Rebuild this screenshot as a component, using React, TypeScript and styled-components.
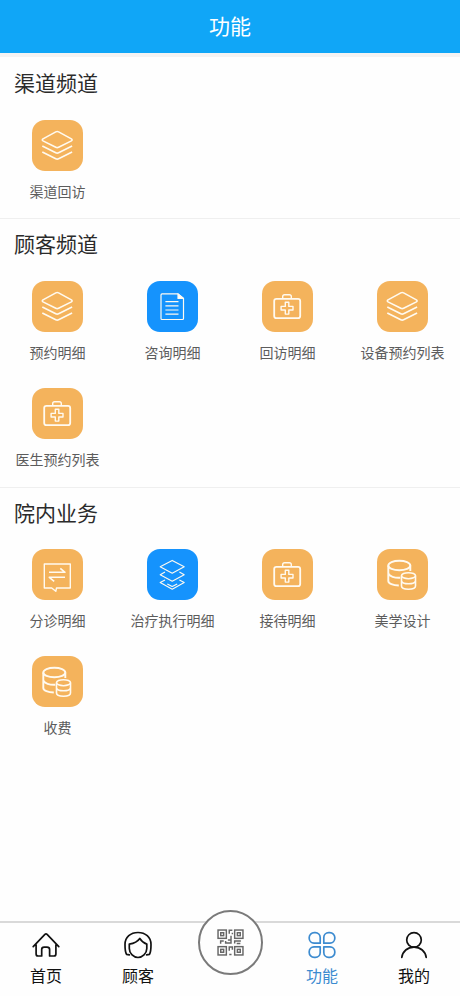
import React from "react";
import styled, { createGlobalStyle } from "styled-components";

const GlobalStyle = createGlobalStyle`
  * { box-sizing: border-box; }
  body {
    margin: 0;
    background: #fff;
    font-family: "Noto Sans CJK SC", sans-serif;
  }
`;

const Page = styled.div`
  display: flex;
  flex-direction: column;
  height: 996px;
  overflow: hidden;
  background: #fefefe;
`;

const Header = styled.header`
  flex: none;
  display: flex;
  align-items: center;
  justify-content: center;
  height: 53px;
  background: #10a6f7;
  color: #fff;
  font-size: 21px;
  line-height: 30px;
  padding-bottom: 3px;
`;

const Content = styled.main`
  flex: 1;
  border-top: 4px solid #f4f3f3;
`;

const Section = styled.section`
  padding-bottom: 15px;
  border-bottom: 1px solid #efefef;
  &:last-child { border-bottom: 0; }
`;

const SectionTitle = styled.h2`
  margin: 0;
  height: 62.8px;
  padding: 10px 14px 0;
  font-size: 21px;
  font-weight: 400;
  line-height: 30px;
  color: #2b2b2b;

  section + section > & {
    height: 61.5px;
    padding-top: 9px;
  }
`;

const Grid = styled.div`
  display: grid;
  grid-template-columns: repeat(4, 115px);
  row-gap: 23.8px;
`;

const Item = styled.div`
  display: flex;
  flex-direction: column;
  align-items: center;
  height: 83.5px;
`;

const Tile = styled.div<{ $blue?: boolean }>`
  width: 51px;
  height: 51px;
  border-radius: 13px;
  background: ${(p) => (p.$blue ? "#1593fd" : "#f4b35c")};
  svg { display: block; }
`;

const Label = styled.span`
  margin-top: 10px;
  font-size: 14px;
  line-height: 20px;
  color: #5c5c5c;
  white-space: nowrap;
`;

const TabBar = styled.nav`
  flex: none;
  display: grid;
  grid-template-columns: repeat(5, 1fr);
  height: 75px;
  border-top: 2px solid #d9d9d9;
`;

const Tab = styled.div<{ $active?: boolean }>`
  display: flex;
  flex-direction: column;
  align-items: center;
  padding-top: 7px;
  color: ${(p) => (p.$active ? "#3c8bd0" : "#111")};
  font-size: 16px;
  line-height: 24px;
  svg { display: block; margin-bottom: 3px; }
`;

const ScanButton = styled.div`
  justify-self: center;
  display: flex;
  align-items: center;
  justify-content: center;
  width: 65px;
  height: 65px;
  margin-top: -13px;
  border: 2px solid #7a7a7a;
  border-radius: 50%;
  background: #fefefe;
`;

type Kind = "layers" | "doc" | "kit" | "message" | "stack" | "coins";

const glyphs: Record<Kind, React.ReactNode> = {
  layers: (
    <g strokeWidth="1.6">
      <path d="M23.8 11.9 11 18.9Q9.6 20 11 20.9L23.8 27.3Q25.2 28 26.6 27.3L39.4 20.9Q40.8 20 39.4 18.9L26.6 11.9Q25.2 11.1 23.8 11.9Z" />
      <path d="M10.3 26 23.8 32.8Q25.2 33.5 26.6 32.8L40.1 26M10.3 32 23.8 38.8Q25.2 39.5 26.6 38.8L40.1 32" />
    </g>
  ),
  doc: (
    <g strokeWidth="1.2">
      <path d="M31 12.9H15Q14 12.9 14 13.9V37.5Q14 38.5 15 38.5H35.5Q36.5 38.5 36.5 37.5V17.5Z" />
      <path d="M31 12.9V17.5H36.5Z" fill="#fff" />
      <path d="M18.4 20.6H31.5M18.4 24.8H31.5M18.4 29H31.5M18.4 33.2H31.5" />
    </g>
  ),
  kit: (
    <g strokeWidth="1.8">
      <rect x="12.2" y="17.8" width="26" height="19.4" rx="2.2" />
      <path d="M20.7 17.4V15.6Q20.7 13.7 22.6 13.7H27.4Q29.3 13.7 29.3 15.6V17.4" strokeWidth="1.4" />
      <path d="M23.3 21.3H26.8V25.4H31V29H26.8V33.1H23.3V29H19.1V25.4H23.3Z" strokeWidth="1.4" />
    </g>
  ),
  message: (
    <g strokeWidth="1.4">
      <path d="M12.3 15H38.3V39H24.5L23.8 42.3 19.7 39H12.3Z" />
      <path d="M17 23.3H33L28.3 19.4M33 28.3H17.3L22.2 32.3" strokeWidth="1.6" />
    </g>
  ),
  stack: (
    <g strokeWidth="1.1">
      <path d="M25.2 11.4 37.2 17.8 25.2 24.2 13.2 17.8Z" />
      <path d="M18 23 13.2 25.8 25.2 32.2 37.2 25.8 32.4 23" />
      <path d="M18 31 13.2 33.6 25.2 40.2 37.2 33.6 32.4 31M20.3 35 25.2 37.5 30.2 35" />
    </g>
  ),
  coins: (
    <g strokeWidth="1.9">
      <ellipse cx="22.3" cy="16.5" rx="11" ry="4.8" />
      <path d="M11.3 16.5V32C11.3 34.5 16 36.3 21.8 36.5M33.3 16.5V22M11.3 24.3C12 27.3 18 29.1 23.3 28.7" />
      <ellipse cx="31.5" cy="26.7" rx="7" ry="3" strokeWidth="1.6" />
      <path d="M24.5 26.7V37C24.5 41.3 38.5 41.3 38.5 37V26.7M24.5 32C25.5 35.7 37.5 35.7 38.5 32" strokeWidth="1.6" />
    </g>
  ),
};

const sections: { title: string; items: { label: string; kind: Kind; blue?: boolean }[] }[] = [
  { title: "渠道频道", items: [{ label: "渠道回访", kind: "layers" }] },
  {
    title: "顾客频道",
    items: [
      { label: "预约明细", kind: "layers" },
      { label: "咨询明细", kind: "doc", blue: true },
      { label: "回访明细", kind: "kit" },
      { label: "设备预约列表", kind: "layers" },
      { label: "医生预约列表", kind: "kit" },
    ],
  },
  {
    title: "院内业务",
    items: [
      { label: "分诊明细", kind: "message" },
      { label: "治疗执行明细", kind: "stack", blue: true },
      { label: "接待明细", kind: "kit" },
      { label: "美学设计", kind: "coins" },
      { label: "收费", kind: "coins" },
    ],
  },
];

const TabIcon = ({ children }: { children: React.ReactNode }) => (
  <svg width="30" height="30" viewBox="0 0 30 30" fill="none" stroke="currentColor" strokeWidth="1.7" strokeLinecap="round" strokeLinejoin="round">
    {children}
  </svg>
);

const QrIcon = () => (
  <svg width="27" height="27" viewBox="0 0 26 26" fill="none" stroke="#666" strokeWidth="1.4">
    {[[1, 1], [17, 1], [1, 17], [17, 17]].map(([x, y]) => (
      <g key={`${x}-${y}`}>
        <rect x={x} y={y} width="8" height="8" />
        <rect x={x + 2.6} y={y + 2.6} width="2.8" height="2.8" />
      </g>
    ))}
    <path d="M11.8 4.5V1.3H14.8M14.8 3.5V5M13.5 6.5V13.5H8.3V11.5M3.5 14.2V11.5H6.5M10.5 10.5H13.5M17 14V11.5H23M19 14H22.5M11.8 21V17.3H14.8V20M11.8 24.5H14" />
  </svg>
);

export default function App() {
  return (
    <Page>
      <GlobalStyle />
      <Header>功能</Header>
      <Content>
        {sections.map((s) => (
          <Section key={s.title}>
            <SectionTitle>{s.title}</SectionTitle>
            <Grid>
              {s.items.map((it) => (
                <Item key={it.label}>
                  <Tile $blue={it.blue}>
                    <svg width="51" height="51" viewBox="0 0 51 51" fill="none" stroke="#fffaf0" strokeLinejoin="round">
                      {glyphs[it.kind]}
                    </svg>
                  </Tile>
                  <Label>{it.label}</Label>
                </Item>
              ))}
            </Grid>
          </Section>
        ))}
      </Content>
      <TabBar>
        <Tab>
          <TabIcon>
            <path d="M2.2 16.6 13.9 4.4Q15 3.4 16.1 4.4L27.8 16.6M5.1 14.5V24Q5.1 26 7.1 26H10.7V19.6Q10.7 17.2 13.1 17.2H16Q18.6 17.2 18.6 19.6V26H22.9Q24.9 26 24.9 24V14.5" />
          </TabIcon>
          首页
        </Tab>
        <Tab>
          <TabIcon>
            <path d="M6.4 24.8 3.5 24.3Q2 22 2 14.5C2 7 7.7 2.5 15 2.5S28 7 28 14.5Q28 22 26.5 24.3L23.6 24.8" />
            <path d="M6.3 14.1Q13.8 12.8 16.8 8.4Q19.3 12.7 23.8 14.1V18.5C23.8 23.5 19.2 27.5 15 27.5S6.3 23.5 6.3 18.5Z" />
          </TabIcon>
          顾客
        </Tab>
        <ScanButton><QrIcon /></ScanButton>
        <Tab $active>
          <TabIcon>
            <path d="M13.2 13.2H7A5 5 0 0 1 2.2 8.2V7.6A5 5 0 0 1 7.2 2.6H8.4A4.8 4.8 0 0 1 13.2 7.4Z" />
            <path d="M16.8 13.2H23A5 5 0 0 0 27.8 8.2V7.6A5 5 0 0 0 22.8 2.6H21.6A4.8 4.8 0 0 0 16.8 7.4Z" />
            <path d="M13.2 16.8H7A5 5 0 0 0 2.2 21.8V22.4A5 5 0 0 0 7.2 27.4H8.4A4.8 4.8 0 0 0 13.2 22.6Z" />
            <path d="M16.8 16.8H23A5 5 0 0 1 27.8 21.8V22.4A5 5 0 0 1 22.8 27.4H21.6A4.8 4.8 0 0 1 16.8 22.6Z" />
          </TabIcon>
          功能
        </Tab>
        <Tab>
          <TabIcon>
            <circle cx="15" cy="9.9" r="7.3" />
            <path d="M2.8 27.4C3.6 21.3 8.5 17.2 15 17.2S26.4 21.3 27.2 27.4" />
          </TabIcon>
          我的
        </Tab>
      </TabBar>
    </Page>
  );
}
